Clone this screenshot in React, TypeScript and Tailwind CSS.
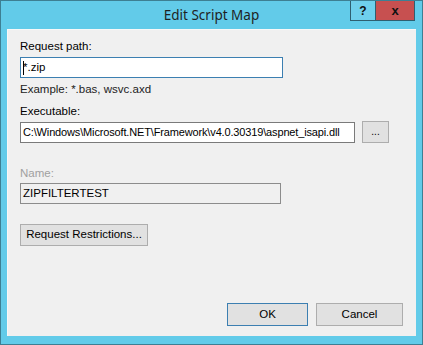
export default function App() {
  const font = { fontFamily: '"Liberation Sans", Arial, sans-serif' };

  return (
    <div
      className="relative w-[423px] h-[345px] bg-[#62cbe9] border border-[#3d7f93] flex flex-col text-[11.5px] text-[#000]"
      style={font}
    >
      {/* Title bar */}
      <div
        className="h-[28px] flex items-center justify-center text-[13.5px] text-[#1f1f1f]"
        style={{ fontFamily: '"Noto Sans", sans-serif' }}
      >
        Edit Script Map
      </div>
      <div className="absolute top-0 right-[7px] flex">
        <div className="w-[26px] h-[20px] bg-[#6fd0ec] border border-[#2f5f70] border-t-0 flex items-center justify-center text-[12px] font-bold text-[#111]">
          ?
        </div>
        <div className="w-[39px] h-[20px] bg-[#c75050] border border-[#2f5f70] border-t-0 border-l-0 flex items-center justify-center font-bold text-[13px] text-[#111]">
          x
        </div>
      </div>

      {/* Client area */}
      <div className="mx-[6px] mb-[8px] flex-1 bg-[#f0f0f0] border-l border-t border-[#f8f8f8] flex flex-col px-[12px] pt-[8px] pb-[10px]">
        <div className="leading-[16px]">Request path:</div>
        <div className="mt-[3px] w-[263px] h-[21px] bg-white border border-[#3c7fb1] flex items-center px-[2px] leading-none">
          <span className="w-px h-[14px] bg-black"></span>
          <span className="-ml-[1px]">*.zip</span>
        </div>
        <div className="mt-[3px] leading-[16px] text-[#222]">Example: *.bas, wsvc.axd</div>

        <div className="mt-[6px] leading-[16px]">Executable:</div>
        <div className="mt-[2px] flex items-center gap-[7px]">
          <div className="w-[335px] h-[21px] bg-white border border-[#7a7a7a] flex items-center px-[2px] whitespace-nowrap overflow-hidden text-[11px] tracking-[-0.15px]">
            C:\Windows\Microsoft.NET\Framework\v4.0.30319\aspnet_isapi.dll
          </div>
          <div className="w-[27px] h-[22px] bg-[#e1e1e1] border border-[#adadad] flex items-center justify-center text-[10px] pb-[2px]">
            ...
          </div>
        </div>

        <div className="mt-[22px] leading-[16px] text-[#a0a0a0]">Name:</div>
        <div className="mt-[2px] w-[261px] h-[21px] bg-[#f0f0f0] border border-[#8c8c8c] flex items-center px-[2px]">
          ZIPFILTERTEST
        </div>

        <div className="mt-[20px] w-[128px] h-[22px] bg-[#e1e1e1] border border-[#adadad] flex items-center justify-center">
          Request Restrictions...
        </div>

        <div className="mt-auto flex justify-end gap-[8px] pr-[1px]">
          <div className="w-[81px] h-[23px] bg-[#e1e1e1] border border-[#3c7fb1] flex items-center justify-center">
            OK
          </div>
          <div className="w-[87px] h-[23px] bg-[#e1e1e1] border border-[#adadad] flex items-center justify-center">
            Cancel
          </div>
        </div>
      </div>
    </div>
  );
}
